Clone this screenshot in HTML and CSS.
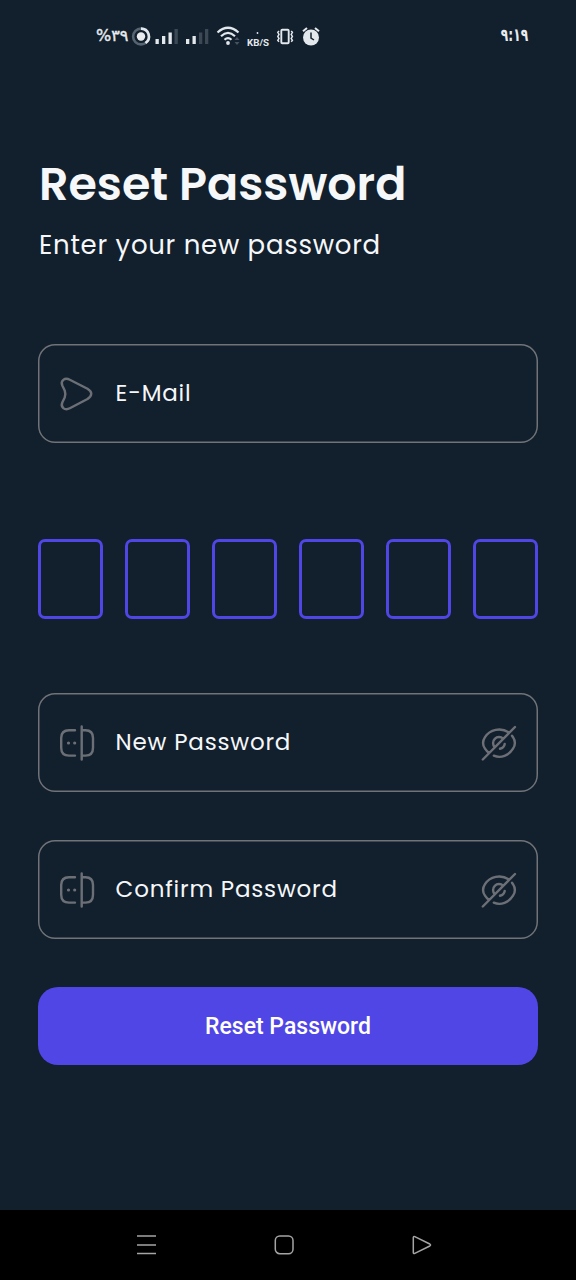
FILE: index.html
```html
<!DOCTYPE html>
<html lang="en">
<head>
<meta charset="utf-8">
<title>Reset Password</title>
<link rel="stylesheet" href="styles.css">
</head>
<body>
<svg class="defs" width="0" height="0">
  <symbol id="lock" viewBox="0 0 40 40">
    <path d="M18 7.200H12Q4.200 7.200 4.200 15v9.800q0 7.800 7.800 7.800H18M24.700 7.200H28.500Q36 7.200 36 15v9.800q0 7.800-7.500 7.800H24.700M24.700 3.500V36.500"/>
    <path class="dots" d="M11.500 20h.01M17.700 20h.01"/>
  </symbol>
  <symbol id="eye-off" viewBox="0 0 40 40">
    <path d="M3.800 36.500 36 4M29.600 9.200C21.500 4.200 11 6.500 6 14.200 3.300 18.200 3.300 21.700 6 25.700Q7.700 28.300 10 30M14.800 32.700C22 35.700 29.800 32.500 34 25.700 36.500 21.900 36.500 18 34 14.200L33 12.800M15.800 24.200A5.900 5.900 0 1 1 24.200 15.800M25.700 21A5.900 5.900 0 0 1 21 25.800"/>
  </symbol>
</svg>
<div class="screen">
  <header class="status">
    <span class="battery">%۳۹</span>
    <svg class="indicators" viewBox="130 22 194 30" width="194" height="30">
      <circle cx="141" cy="36.500" r="7.900" fill="none" stroke="#566370" stroke-width="2.600"/>
      <path d="M141 28.600a7.900 7.900 0 0 1 4.500 14.400" fill="none" stroke="#e3e8ec" stroke-width="2.600"/>
      <circle cx="141" cy="36.500" r="4.200" fill="#e8ecef"/>
      <path fill="#e3e8ec" d="M155.500 39h3.300v5h-3.300zM162 36h3.300v8H162zM168.500 32.500h3.300V44h-3.300zM186 39h3.300v5H186zM192.500 36h3.300v8h-3.300z"/>
      <path fill="#3c4955" d="M174.500 29h3.300v15h-3.300zM199 32.500h3.300V44H199zM205 29h3.300v15H205z"/>
      <g fill="none" stroke="#e3e8ec" stroke-width="2.200">
        <path d="M217.500 32.500Q228 23 238.500 32.500M221 36.200Q228 29.500 235 36.200M224.500 39.800Q228 36.500 231.500 39.800"/>
        <rect x="281.300" y="29.700" width="7.400" height="13.600" rx="1" stroke-width="1.900"/>
        <path stroke-width="1.500" d="m279 31-1.200 1.400 1.200 2-1.200 2 1.200 2-1.200 2 1.200 1.400M291.200 31l1.200 1.400-1.200 2 1.200 2-1.200 2 1.200 2-1.200 1.400"/>
        <path stroke-width="2" d="m303 31.300 4-3.400M319 31.300l-4-3.400"/>
      </g>
      <circle cx="228" cy="43" r="1.900" fill="#e3e8ec"/>
      <path fill="#46525e" d="m234.500 40 2.500-3 2.500 3zM234.500 42l2.500 3 2.500-3z"/>
      <circle cx="257.500" cy="33" r=".9" fill="#e3e8ec"/>
      <text x="247" y="46" textLength="22" lengthAdjust="spacingAndGlyphs">KB/S</text>
      <circle cx="311" cy="37.500" r="8" fill="#e3e8ec"/>
      <path d="M311 32.500v5.500l3 2" fill="none" stroke="#14202e" stroke-width="1.500"/>
    </svg>
    <span class="clock">۹:۱۹</span>
  </header>
  <main class="content">
    <h1>Reset Password</h1>
    <p class="subtitle">Enter your new password</p>
    <div class="field email">
      <svg class="icon" viewBox="0 0 40 40"><path d="M12.800 5.700 30.500 14.800Q38 19.500 30.500 25L12.800 34.300C7.500 37 3.300 33 5.300 28.500L7.700 23.500Q9 20 7.700 16.500L5.300 11.500C3.300 7 7.500 3 12.800 5.700Z"/></svg>
      <span class="label">E-Mail</span>
    </div>
    <div class="code"><i></i><i></i><i></i><i></i><i></i><i></i></div>
    <div class="field">
      <svg class="icon"><use href="#lock"/></svg>
      <span class="label">New Password</span>
      <svg class="icon"><use href="#eye-off"/></svg>
    </div>
    <div class="field confirm">
      <svg class="icon"><use href="#lock"/></svg>
      <span class="label">Confirm Password</span>
      <svg class="icon"><use href="#eye-off"/></svg>
    </div>
    <button class="submit">Reset Password</button>
  </main>
  <nav class="navbar">
    <svg viewBox="0 0 22 22"><path d="M1 2h19M1 11h19M1 19.500h19"/></svg>
    <svg viewBox="0 0 22 22"><rect x="1.300" y="2" width="17.700" height="17.700" rx="4.500"/></svg>
    <svg viewBox="0 0 22 22"><path d="M1.300 3.500Q1.300 2 2.800 2.600L17.800 10Q19.300 11 17.800 12L2.800 19.400Q1.300 20 1.300 18.500Z"/></svg>
  </nav>
</div>
</body>
</html>
```
FILE: styles.css
```css
* { box-sizing: border-box; }
body { margin: 0; background: #121f2d; }
.defs { display: block; }
.screen {
  width: 576px; height: 1280px;
  display: flex; flex-direction: column;
  background: #121f2d; color: #f5f7f9;
  font-family: Poppins, Inter, sans-serif;
}
.status {
  height: 72px; padding: 22px 48px 0 96px;
  display: flex; align-items: flex-start;
  font-family: "DejaVu Sans", sans-serif; color: #e8ecef;
}
.battery { width: 34px; font-size: 16px; line-height: 27px; direction: ltr; unicode-bidi: bidi-override; white-space: nowrap; -webkit-text-stroke: 0.4px currentColor; }
.indicators text { font: 700 9.500px Roboto, sans-serif; fill: #e3e8ec; }
.clock { margin-left: auto; font-size: 18px; font-weight: 700; line-height: 26px; direction: ltr; unicode-bidi: bidi-override; transform: scaleX(0.68); transform-origin: right; }
.content { flex: 1; padding: 82px 38px 0; }
h1 { margin: 0 0 0 1px; font-size: 46px; font-weight: 600; line-height: 60px; white-space: nowrap; }
.subtitle { margin: 11px 0 0 1px; font-size: 26px; line-height: 40px; letter-spacing: 0.72px; white-space: nowrap; }
.field {
  height: 99px; padding: 0 18px;
  display: flex; align-items: center;
  border-radius: 17px; box-shadow: inset 0 0 0 1.500px #707378;
}
.email { margin-top: 79px; }
.icon { width: 40px; height: 40px; fill: none; stroke: #6c7076; stroke-width: 2.4; stroke-linecap: round; stroke-linejoin: round; }
.field .icon { margin-left: 1px; }
.label + .icon { margin-right: 1px; }
.dots { stroke-width: 3.2; }
.label { flex: 1; margin: 0 0 1px 18.600px; font-size: 23px; line-height: 32px; letter-spacing: 0.8px; white-space: nowrap; }
.code { display: flex; justify-content: space-between; margin: 96px 0 74px; }
.code i { width: 65px; height: 80px; border: 3px solid #4f46e5; border-radius: 7px; }
.confirm { margin-top: 48px; }
.submit {
  display: block; width: 100%; height: 78px; margin-top: 48px; padding: 0;
  border: 0; border-radius: 20px; background: #4f46e5; color: #fff;
  font: 500 23px Roboto, sans-serif;
}
.navbar {
  height: 70px; padding: 0 142px 0 136px;
  display: flex; align-items: center; justify-content: space-between; background: #000;
}
.navbar svg { width: 22px; height: 22px; fill: none; stroke: #a5a5a5; stroke-width: 1.500; }
```
